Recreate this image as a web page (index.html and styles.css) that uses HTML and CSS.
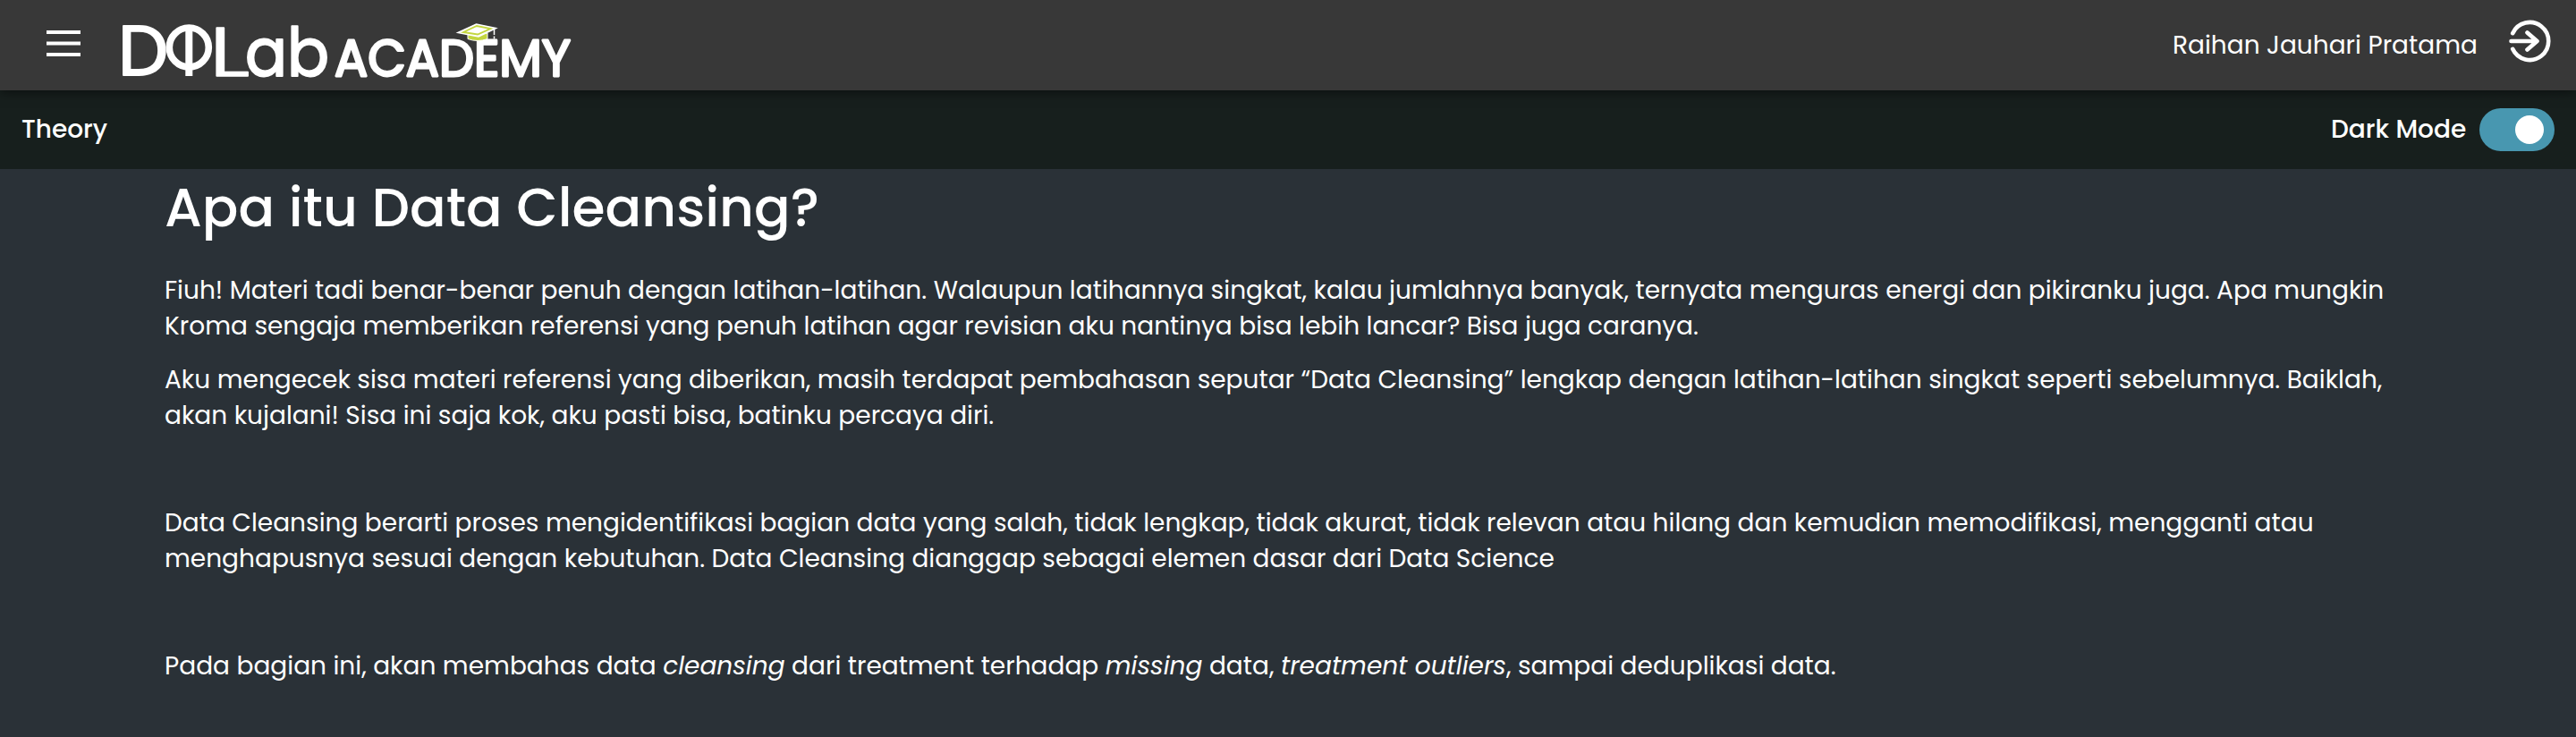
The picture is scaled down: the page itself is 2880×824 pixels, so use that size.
FILE: index.html
```html
<!DOCTYPE html>
<html lang="id">
<head>
<meta charset="utf-8">
<title>DQLab Academy</title>
<link rel="stylesheet" href="styles.css">
</head>
<body>
<header class="topbar">
  <svg class="menu" viewBox="0 0 38 30"><path d="M0 2h38M0 14.500h38M0 27h38" stroke="#fff" stroke-width="4"/></svg>
  <svg class="logo" viewBox="0 0 510 70">
    <text class="logo-big" y="64" x="-6" textLength="56" lengthAdjust="spacingAndGlyphs">D</text>
    <text class="logo-big logo-l" y="64.500" x="96" textLength="45" lengthAdjust="spacingAndGlyphs">L</text>
    <text class="logo-big logo-ab" y="64.500" x="136" textLength="94" lengthAdjust="spacingAndGlyphs">ab</text>
    <circle cx="73.300" cy="33" r="22" fill="none" stroke="#fff" stroke-width="7.600"/>
    <path d="M73.300 12v53" stroke="#fff" stroke-width="8"/>
    <text class="logo-small" x="236" y="64.500" textLength="264" lengthAdjust="spacingAndGlyphs">ACADEMY</text>
    <path d="M385 17v6.500q11 4 22 0v-6.500z" fill="#c3d63f" stroke="#fff"/>
    <path d="M374 16.500L394.500 7l22 4.500L397 21z" fill="#fff" stroke="#fff" stroke-width="1.500"/>
    <path d="M380 16L395 9l15.500 3L396 18.500z" fill="#fff" stroke="#c3d63f" stroke-width="1.800"/>
    <path d="M414.500 12v7M414.500 20.500v3" stroke="#fff" stroke-width="1.500"/>
  </svg>
  <span class="user">Raihan Jauhari Pratama</span>
  <svg class="exit" viewBox="0 0 48 48" fill="none" stroke="#fff" stroke-width="4.600" stroke-linecap="round" stroke-linejoin="round"><path d="M5.200 15.200a21 21 0 1 1 0 17.600M3.500 24H32M21.500 14.500L32.500 24 21.500 33.500"/></svg>
</header>
<div class="subbar">
  <span class="theory">Theory</span>
  <span class="mode">Dark Mode</span>
  <span class="toggle"><span class="knob"></span></span>
</div>
<main class="content">
  <h1 class="title">Apa itu Data Cleansing?</h1>
  <p>Fiuh! Materi tadi benar-benar penuh dengan latihan-latihan. Walaupun latihannya singkat, kalau jumlahnya banyak, ternyata menguras energi dan pikiranku juga. Apa mungkin Kroma sengaja memberikan referensi yang penuh latihan agar revisian aku nantinya bisa lebih lancar? Bisa juga caranya.</p>
  <p>Aku mengecek sisa materi referensi yang diberikan, masih terdapat pembahasan seputar “Data Cleansing” lengkap dengan latihan-latihan singkat seperti sebelumnya. Baiklah, akan kujalani! Sisa ini saja kok, aku pasti bisa, batinku percaya diri.</p>
  <p>&nbsp;</p>
  <p>Data Cleansing berarti proses mengidentifikasi bagian data yang salah, tidak lengkap, tidak akurat, tidak relevan atau hilang dan kemudian memodifikasi, mengganti atau menghapusnya sesuai dengan kebutuhan. Data Cleansing dianggap sebagai elemen dasar dari Data Science</p>
  <p>&nbsp;</p>
  <p>Pada bagian ini, akan membahas data <em>cleansing</em> dari treatment terhadap <em>missing</em> data, <em>treatment outliers</em>, sampai deduplikasi data.</p>
</main>
</body>
</html>
```
FILE: styles.css
```css
* { box-sizing: border-box; }
body {
  margin: 0;
  height: 824px;
  overflow: hidden;
  background: #2a3137;
  color: #fff;
  font: 400 28px/40px Poppins, Inter, sans-serif;
}
.topbar {
  display: flex;
  align-items: flex-start;
  height: 101px;
  background: #383838;
  box-shadow: 0 2px 12px rgba(0, 0, 0, .5);
  position: relative;
  padding-left: 52px;
}
.menu { width: 38px; height: 30px; margin: 34px 48px 0 0; }
.logo { width: 510px; height: 70px; margin-top: 20px; overflow: visible; }
.logo text { fill: #fff; stroke: #fff; stroke-linejoin: round; }
.logo-big { font-size: 78px; font-weight: 400; stroke-width: 2px; }
.logo-l { font-weight: 300; stroke-width: 1.6px; }
.logo-ab { font-size: 76px; }
.logo-small { font-size: 57px; font-weight: 400; stroke-width: 2.8px; }
.user { margin: 31px 0 0 auto; width: 341px; white-space: nowrap; }
.exit { width: 48px; height: 48px; margin: 22px 28px 0 34px; }
.subbar {
  display: flex;
  align-items: flex-start;
  height: 88px;
  padding: 20px 24px 0;
  background: #171f1d;
  font-weight: 500;
}
.theory, .mode { padding-top: 4px; white-space: nowrap; }
.mode { margin-left: auto; width: 166px; }
.toggle { width: 84px; height: 48px; border-radius: 24px; background: #4897b0; padding: 8px 0 0 40px; }
.knob { display: block; width: 32px; height: 32px; border-radius: 50%; background: #fff; }
.content { padding: 0 184px; }
.title { margin: 0 0 30px; font-size: 60px; line-height: 86px; font-weight: 500; white-space: nowrap; }
p { margin: 0 0 20px; }
```
